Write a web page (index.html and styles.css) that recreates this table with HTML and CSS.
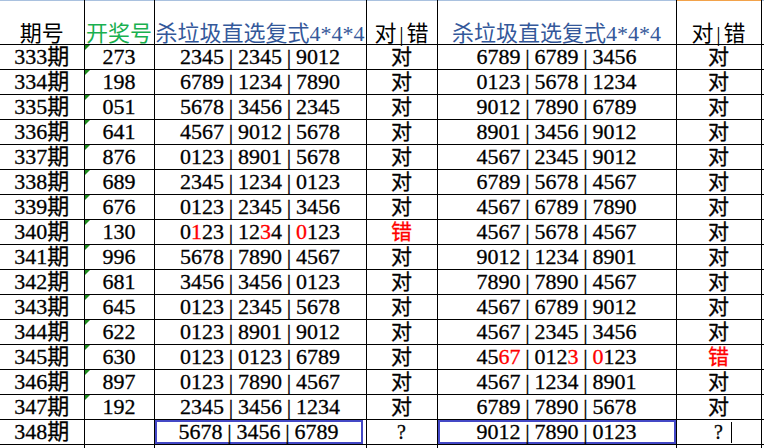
FILE: index.html
```html
<!DOCTYPE html>
<html lang="zh">
<head>
<meta charset="utf-8">
<title>杀垃圾直选复式</title>
<link rel="stylesheet" href="styles.css">
</head>
<body>
<table class="sheet">
  <colgroup>
    <col class="c1"><col class="c2"><col class="c3"><col class="c4"><col class="c5"><col class="c6"><col class="c7">
  </colgroup>
  <thead>
    <tr>
      <th>期号</th>
      <th class="green">开奖号</th>
      <th class="blue">杀垃圾直选复式4*4*4</th>
      <th>对<span class="bar">|</span>错</th>
      <th class="blue">杀垃圾直选复式4*4*4</th>
      <th class="sel">对<span class="bar orange">|</span>错</th>
      <th class="edge"></th>
    </tr>
  </thead>
  <tbody>
    <tr><td>333期</td><td class="tri">273</td><td><span class="g">2345</span><span class="s">|</span><span class="g">2345</span><span class="s">|</span><span class="g">9012</span></td><td class="cj">对</td><td><span class="g">6789</span><span class="s">|</span><span class="g">6789</span><span class="s">|</span><span class="g">3456</span></td><td class="cj">对</td><td class="edge"></td></tr>
    <tr><td>334期</td><td class="tri">198</td><td><span class="g">6789</span><span class="s">|</span><span class="g">1234</span><span class="s">|</span><span class="g">7890</span></td><td class="cj">对</td><td><span class="g">0123</span><span class="s">|</span><span class="g">5678</span><span class="s">|</span><span class="g">1234</span></td><td class="cj">对</td><td class="edge"></td></tr>
    <tr><td>335期</td><td class="tri">051</td><td><span class="g">5678</span><span class="s">|</span><span class="g">3456</span><span class="s">|</span><span class="g">2345</span></td><td class="cj">对</td><td><span class="g">9012</span><span class="s">|</span><span class="g">7890</span><span class="s">|</span><span class="g">6789</span></td><td class="cj">对</td><td class="edge"></td></tr>
    <tr><td>336期</td><td class="tri">641</td><td><span class="g">4567</span><span class="s">|</span><span class="g">9012</span><span class="s">|</span><span class="g">5678</span></td><td class="cj">对</td><td><span class="g">8901</span><span class="s">|</span><span class="g">3456</span><span class="s">|</span><span class="g">9012</span></td><td class="cj">对</td><td class="edge"></td></tr>
    <tr><td>337期</td><td class="tri">876</td><td><span class="g">0123</span><span class="s">|</span><span class="g">8901</span><span class="s">|</span><span class="g">5678</span></td><td class="cj">对</td><td><span class="g">4567</span><span class="s">|</span><span class="g">2345</span><span class="s">|</span><span class="g">9012</span></td><td class="cj">对</td><td class="edge"></td></tr>
    <tr><td>338期</td><td class="tri">689</td><td><span class="g">2345</span><span class="s">|</span><span class="g">1234</span><span class="s">|</span><span class="g">0123</span></td><td class="cj">对</td><td><span class="g">6789</span><span class="s">|</span><span class="g">5678</span><span class="s">|</span><span class="g">4567</span></td><td class="cj">对</td><td class="edge"></td></tr>
    <tr><td>339期</td><td class="tri">676</td><td><span class="g">0123</span><span class="s">|</span><span class="g">2345</span><span class="s">|</span><span class="g">3456</span></td><td class="cj">对</td><td><span class="g">4567</span><span class="s">|</span><span class="g">6789</span><span class="s">|</span><span class="g">7890</span></td><td class="cj">对</td><td class="edge"></td></tr>
    <tr><td>340期</td><td class="tri">130</td><td><span class="g">0<em>1</em>23</span><span class="s">|</span><span class="g">12<em>3</em>4</span><span class="s">|</span><span class="g"><em>0</em>123</span></td><td class="cj"><em>错</em></td><td><span class="g">4567</span><span class="s">|</span><span class="g">5678</span><span class="s">|</span><span class="g">4567</span></td><td class="cj">对</td><td class="edge"></td></tr>
    <tr><td>341期</td><td class="tri">996</td><td><span class="g">5678</span><span class="s">|</span><span class="g">7890</span><span class="s">|</span><span class="g">4567</span></td><td class="cj">对</td><td><span class="g">9012</span><span class="s">|</span><span class="g">1234</span><span class="s">|</span><span class="g">8901</span></td><td class="cj">对</td><td class="edge"></td></tr>
    <tr><td>342期</td><td class="tri">681</td><td><span class="g">3456</span><span class="s">|</span><span class="g">3456</span><span class="s">|</span><span class="g">0123</span></td><td class="cj">对</td><td><span class="g">7890</span><span class="s">|</span><span class="g">7890</span><span class="s">|</span><span class="g">4567</span></td><td class="cj">对</td><td class="edge"></td></tr>
    <tr><td>343期</td><td class="tri">645</td><td><span class="g">0123</span><span class="s">|</span><span class="g">2345</span><span class="s">|</span><span class="g">5678</span></td><td class="cj">对</td><td><span class="g">4567</span><span class="s">|</span><span class="g">6789</span><span class="s">|</span><span class="g">9012</span></td><td class="cj">对</td><td class="edge"></td></tr>
    <tr><td>344期</td><td class="tri">622</td><td><span class="g">0123</span><span class="s">|</span><span class="g">8901</span><span class="s">|</span><span class="g">9012</span></td><td class="cj">对</td><td><span class="g">4567</span><span class="s">|</span><span class="g">2345</span><span class="s">|</span><span class="g">3456</span></td><td class="cj">对</td><td class="edge"></td></tr>
    <tr><td>345期</td><td class="tri">630</td><td><span class="g">0123</span><span class="s">|</span><span class="g">0123</span><span class="s">|</span><span class="g">6789</span></td><td class="cj">对</td><td><span class="g">45<em>67</em></span><span class="s">|</span><span class="g">012<em>3</em></span><span class="s">|</span><span class="g"><em>0</em>123</span></td><td class="cj"><em>错</em></td><td class="edge"></td></tr>
    <tr><td>346期</td><td class="tri">897</td><td><span class="g">0123</span><span class="s">|</span><span class="g">7890</span><span class="s">|</span><span class="g">4567</span></td><td class="cj">对</td><td><span class="g">4567</span><span class="s">|</span><span class="g">1234</span><span class="s">|</span><span class="g">8901</span></td><td class="cj">对</td><td class="edge"></td></tr>
    <tr><td>347期</td><td class="tri">192</td><td><span class="g">2345</span><span class="s">|</span><span class="g">3456</span><span class="s">|</span><span class="g">1234</span></td><td class="cj">对</td><td><span class="g">6789</span><span class="s">|</span><span class="g">7890</span><span class="s">|</span><span class="g">5678</span></td><td class="cj">对</td><td class="edge"></td></tr>
    <tr class="last">
      <td>348期</td><td></td>
      <td class="boxed"><div class="box box-left"><span class="g">5678</span><span class="s">|</span><span class="g">3456</span><span class="s">|</span><span class="g">6789</span></div></td>
      <td class="q">?</td>
      <td class="boxed"><div class="box"><span class="g">9012</span><span class="s">|</span><span class="g">7890</span><span class="s">|</span><span class="g">0123</span></div></td>
      <td class="q cursor-cell">?<span class="caret"></span></td>
      <td class="edge"></td>
    </tr>
    <tr class="tail"><td></td><td></td><td></td><td></td><td></td><td></td><td class="edge"></td></tr>
  </tbody>
</table>
</body>
</html>
```

FILE: styles.css
```css
html, body {
  margin: 0;
  padding: 0;
  background: #ffffff;
  overflow: hidden;
}

.sheet {
  border-collapse: collapse;
  table-layout: fixed;
  width: 764px;
  font-family: "Liberation Serif", "Noto Sans CJK SC", serif;
  font-size: 22px;
  color: #000;
}

.c1 { width: 84px; }
.c2 { width: 70px; }
.c3 { width: 212px; }
.c4 { width: 71px; }
.c5 { width: 239px; }
.c6 { width: 85px; }
.c7 { width: 3px; }

.sheet th,
.sheet td {
  padding: 0;
  text-align: center;
  white-space: nowrap;
  overflow: visible;
  border-right: 1px solid #000;
  border-bottom: 1px solid #000;
  font-weight: normal;
}

.sheet th:first-child,
.sheet td:first-child {
  border-left: none;
}

.sheet thead th {
  height: 43px;
  vertical-align: bottom;
  padding-bottom: 0;
  line-height: 20px;
  border-top: 1px solid #a9c1df;
}

.sheet thead th.sel {
  border-top-color: #f2a24a;
}

.green { color: #19b04f; }
.blue { color: #34589a; }

.bar {
  display: inline-block;
  width: 10px;
  text-align: center;
  font-family: "Liberation Serif", serif;
}

.sheet tbody td {
  height: 24px;
  line-height: 24px;
  vertical-align: middle;
  -webkit-text-stroke: 0.3px;
}

.tri {
  position: relative;
}

.tri::before {
  content: "";
  position: absolute;
  left: 0;
  top: 0;
  border-top: 5px solid #1e8c1e;
  border-right: 5px solid transparent;
}

.g {
  display: inline-block;
}

.s {
  display: inline-block;
  width: 14px;
  text-align: center;
}

em {
  font-style: normal;
  color: #ff0000;
}

.cj {
  font-family: "Liberation Serif", "Noto Sans CJK SC", sans-serif;
  font-size: 21px;
}

.q {
  font-family: "Liberation Serif", serif;
  font-weight: bold;
  font-size: 20px;
}

.boxed {
  padding: 0;
}

.box {
  box-sizing: border-box;
  height: 24px;
  line-height: 20px;
  border: 2px solid #4448c6;
}

.box-left {
  margin-right: 3px;
}

.cursor-cell {
  position: relative;
}

.caret {
  position: absolute;
  left: 54px;
  top: 2px;
  width: 1px;
  height: 21px;
  background: #000;
}

.sheet td.edge,
.sheet th.edge {
  border-right: none;
}

.tail td {
  height: 4px;
  border-bottom: none;
}
```
